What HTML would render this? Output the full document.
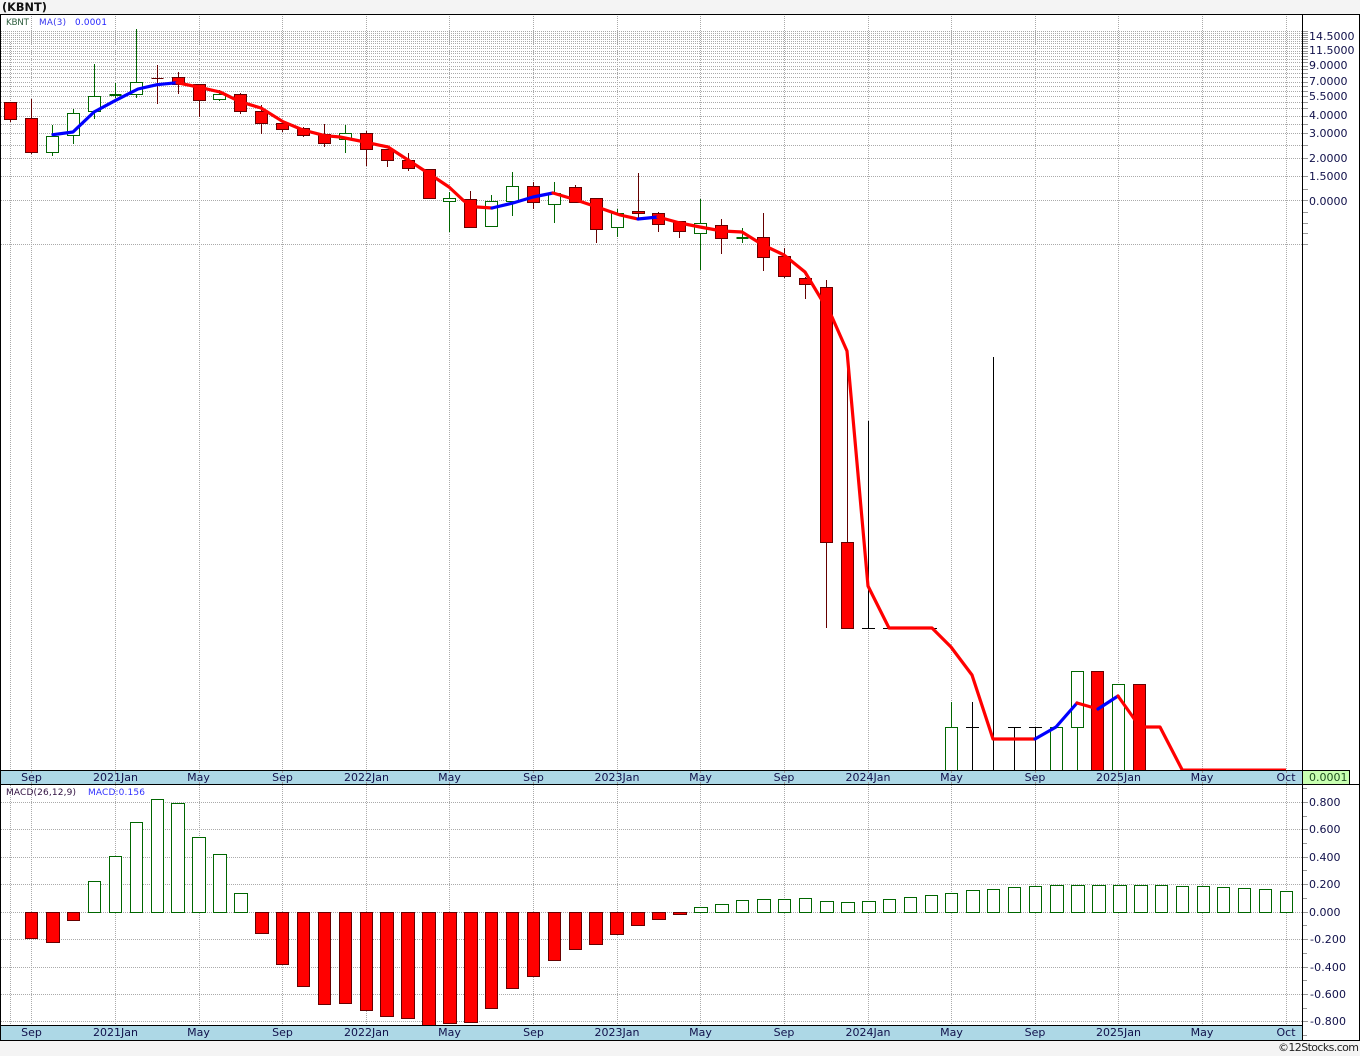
<!DOCTYPE html>
<html>
<head>
<meta charset="utf-8">
<title>KBNT</title>
<style>
html,body{margin:0;padding:0;background:#f4f4f4;width:1360px;height:1056px;overflow:hidden}
svg{display:block}
text{font-family:"DejaVu Sans","Liberation Sans",sans-serif;font-size:11px;fill:#10104a}
.g{fill:none;stroke:#aaa;stroke-width:1;stroke-dasharray:1 1;shape-rendering:crispEdges}
.t{fill:none;stroke:#999;stroke-width:1;shape-rendering:crispEdges}
.k{fill:none;stroke:#000;stroke-width:1;shape-rendering:crispEdges}
.wr{fill:none;stroke:#660000;stroke-width:1;shape-rendering:crispEdges}
.wg{fill:none;stroke:#006600;stroke-width:1;shape-rendering:crispEdges}
.r rect{fill:#f00;stroke:#660000;stroke-width:1;shape-rendering:crispEdges}
.h rect{fill:#fff;stroke:#006600;stroke-width:1;shape-rendering:crispEdges}
.mr{fill:none;stroke:#f00;stroke-width:3.2;stroke-linejoin:round;stroke-linecap:round}
.mb{fill:none;stroke:#00f;stroke-width:3.2;stroke-linejoin:round;stroke-linecap:round}
.c{text-anchor:middle}
</style>
</head>
<body>
<svg width="1360" height="1056" viewBox="0 0 1360 1056" xmlns="http://www.w3.org/2000/svg">
<rect x="0" y="0" width="1360" height="1056" fill="#f4f4f4"/>
<rect x="0" y="14" width="1360" height="1027" fill="#fff"/>

<!-- grid upper -->
<path class="g" d="M1 244.5H1303M1 200.5H1303M1 176.5H1303M1 158.5H1303M1 145.5H1303M1 133.5H1303M1 124.5H1303M1 116.5H1303M1 108.5H1303M1 102.5H1303M1 96.5H1303M1 91.5H1303M1 86.5H1303M1 82.5H1303M1 77.5H1303M1 73.5H1303M1 69.5H1303M1 66.5H1303M1 62.5H1303M1 59.5H1303M1 56.5H1303M1 53.5H1303M1 51.5H1303M1 48.5H1303M1 46.5H1303M1 43.5H1303M1 41.5H1303M1 39.5H1303M1 37.5H1303M1 35.5H1303M1 33.5H1303M1 31.5H1303"/>
<path class="g" d="M10.5 42V770M31.5 14V770M115.5 14V770M199.5 14V770M282.5 14V770M366.5 14V770M449.5 14V770M533.5 14V770M617.5 14V770M700.5 14V770M784.5 14V770M868.5 14V770M951.5 14V770M1035.5 14V770M1118.5 14V770M1202.5 14V770M1286.5 14V770"/>

<!-- grid lower -->
<path class="g" d="M1 802.5H1303M1 829.5H1303M1 857.5H1303M1 884.5H1303M1 912.5H1303M1 939.5H1303M1 967.5H1303M1 994.5H1303M1 1021.5H1303"/>
<path class="g" d="M10.5 785V1025M31.5 785V1025M115.5 785V1025M199.5 785V1025M282.5 785V1025M366.5 785V1025M449.5 785V1025M533.5 785V1025M617.5 785V1025M700.5 785V1025M784.5 785V1025M868.5 785V1025M951.5 785V1025M1035.5 785V1025M1118.5 785V1025M1202.5 785V1025M1286.5 785V1025"/>

<!-- wicks -->
<path class="wr" d="M10.5 120V122M31.5 99V154M157.5 65V104M151.5 78.5H163.5M178.5 72V94M199.5 84V117M240.5 93V114M261.5 105V134M282.5 123V132M303.5 127V137M324.5 124V147M366.5 131V166M387.5 149V167M408.5 153V171M470.5 191V227M533.5 182V209M575.5 185V202M596.5 198V243M638.5 173V218M658.5 212V232M679.5 221V238M721.5 219V254M763.5 213V271M784.5 248V278M805.5 277V299M826.5 280V628M847.5 351V543"/>
<path class="wg" d="M52.5 125V156M73.5 109V144M94.5 64V119M115.5 83V98M136.5 29V98M219.5 90V101M345.5 125V153M449.5 192V232M491.5 195V227M512.5 172V216M554.5 182V223M617.5 209V237M700.5 199V270M742.5 228V243M951.5 702V728M1077.5 727V770"/>
<path class="k" d="M868.5 421V628M862 628.5H875M883 628.5H937M972.5 702V770M966 727.5H979M993.5 357V770M1014.5 727V770M1008 727.5H1021M1035.5 727V770M1029 727.5H1042"/>

<!-- filled doji -->
<rect x="109.5" y="94" width="12" height="2" fill="#006600"/>
<rect x="736.5" y="237" width="12" height="2" fill="#006600"/>

<!-- hollow candles -->
<g class="h">
<rect x="46.5" y="136.5" width="12" height="16"/>
<rect x="67.5" y="113.5" width="12" height="22"/>
<rect x="88.5" y="96.5" width="12" height="15"/>
<rect x="130.5" y="82.5" width="12" height="12"/>
<rect x="213.5" y="94.5" width="12" height="5"/>
<rect x="339.5" y="133.5" width="12" height="6"/>
<rect x="443.5" y="198.5" width="12" height="3"/>
<rect x="485.5" y="201.5" width="12" height="25"/>
<rect x="506.5" y="186.5" width="12" height="15"/>
<rect x="548.5" y="193.5" width="12" height="11"/>
<rect x="611.5" y="213.5" width="12" height="14"/>
<rect x="694.5" y="223.5" width="12" height="10"/>
<rect x="945.5" y="727.5" width="12" height="43"/>
<rect x="1050.5" y="727.5" width="12" height="43"/>
<rect x="1071.5" y="671.5" width="12" height="56"/>
<rect x="1112.5" y="684.5" width="12" height="86"/>
</g>

<!-- red candles -->
<g class="r">
<rect x="4.5" y="102.5" width="12" height="17"/>
<rect x="25.5" y="118.5" width="12" height="34"/>
<rect x="172.5" y="77.5" width="12" height="7"/>
<rect x="193.5" y="84.5" width="12" height="16"/>
<rect x="234.5" y="94.5" width="12" height="17"/>
<rect x="255.5" y="111.5" width="12" height="12"/>
<rect x="276.5" y="123.5" width="12" height="6"/>
<rect x="297.5" y="128.5" width="12" height="7"/>
<rect x="318.5" y="134.5" width="12" height="9"/>
<rect x="360.5" y="133.5" width="12" height="16"/>
<rect x="381.5" y="149.5" width="12" height="11"/>
<rect x="402.5" y="160.5" width="12" height="8"/>
<rect x="423.5" y="169.5" width="12" height="29"/>
<rect x="464.5" y="199.5" width="12" height="28"/>
<rect x="527.5" y="186.5" width="12" height="16"/>
<rect x="569.5" y="187.5" width="12" height="15"/>
<rect x="590.5" y="198.5" width="12" height="31"/>
<rect x="632.5" y="211.5" width="12" height="2"/>
<rect x="652.5" y="213.5" width="12" height="11"/>
<rect x="673.5" y="221.5" width="12" height="10"/>
<rect x="715.5" y="225.5" width="12" height="13"/>
<rect x="757.5" y="237.5" width="12" height="20"/>
<rect x="778.5" y="256.5" width="12" height="20"/>
<rect x="799.5" y="278.5" width="12" height="6"/>
<rect x="820.5" y="287.5" width="12" height="255"/>
<rect x="841.5" y="542.5" width="12" height="86"/>
<rect x="1091.5" y="671.5" width="12" height="99"/>
<rect x="1133.5" y="684.5" width="12" height="86"/>
</g>

<!-- moving average -->
<path class="mb" d="M53 134.7L73 132L94 112L115 100.7L138 89L157 84.7L177 82.7"/>
<path class="mr" d="M177 82.7L198 87L220 92L240 101.7L261 108L283 121.7L303 130L325 135.7L340 137L360 141L388 147L408 160L428 173L449 187L464 201L477 207L492 208"/>
<path class="mb" d="M492 208L513 203L533 197L553 193"/>
<path class="mr" d="M553 193L573 199L597 207L620 215L638 219"/>
<path class="mb" d="M638 219L658 217"/>
<path class="mr" d="M658 217L680 223L700 227L722 231L742 232L763 245L784 255L805 272L820 297L832 317L847 351L868 586L889 628L932 628L951 647L972 675L993 739L1035 739"/>
<path class="mb" d="M1035 739L1056 727L1077 703"/>
<path class="mr" d="M1077 703L1098 709"/>
<path class="mb" d="M1098 709L1118 696"/>
<path class="mr" d="M1118 696L1140 727L1160 727L1182 769.5"/>
<path d="M1182 769.5H1286" fill="none" stroke="#f00" stroke-width="2"/>

<!-- MACD bars -->
<g class="r">
<rect x="25.5" y="912.5" width="12" height="26"/>
<rect x="46.5" y="912.5" width="13" height="30"/>
<rect x="67.5" y="912.5" width="12" height="8"/>
<rect x="255.5" y="912.5" width="13" height="21"/>
<rect x="276.5" y="912.5" width="12" height="52"/>
<rect x="297.5" y="912.5" width="12" height="74"/>
<rect x="318.5" y="912.5" width="12" height="92"/>
<rect x="339.5" y="912.5" width="12" height="91"/>
<rect x="360.5" y="912.5" width="12" height="98"/>
<rect x="380.5" y="912.5" width="13" height="104"/>
<rect x="401.5" y="912.5" width="13" height="106"/>
<rect x="422.5" y="912.5" width="13" height="113"/>
<rect x="443.5" y="912.5" width="13" height="111"/>
<rect x="464.5" y="912.5" width="13" height="110"/>
<rect x="485.5" y="912.5" width="12" height="96"/>
<rect x="506.5" y="912.5" width="12" height="76"/>
<rect x="527.5" y="912.5" width="12" height="64"/>
<rect x="548.5" y="912.5" width="12" height="48"/>
<rect x="569.5" y="912.5" width="12" height="37"/>
<rect x="589.5" y="912.5" width="13" height="32"/>
<rect x="610.5" y="912.5" width="13" height="22"/>
<rect x="631.5" y="912.5" width="13" height="13"/>
<rect x="652.5" y="912.5" width="13" height="7"/>
<rect x="673.5" y="912.5" width="13" height="2"/>
</g>
<g class="h">
<rect x="88.5" y="881.5" width="12" height="31"/>
<rect x="109.5" y="856.5" width="12" height="56"/>
<rect x="130.5" y="822.5" width="12" height="90"/>
<rect x="151.5" y="799.5" width="12" height="113"/>
<rect x="171.5" y="803.5" width="13" height="109"/>
<rect x="192.5" y="837.5" width="13" height="75"/>
<rect x="213.5" y="854.5" width="13" height="58"/>
<rect x="234.5" y="893.5" width="13" height="19"/>
<rect x="694.5" y="907.5" width="13" height="5"/>
<rect x="715.5" y="904.5" width="13" height="8"/>
<rect x="736.5" y="900.5" width="12" height="12"/>
<rect x="757.5" y="899.5" width="13" height="13"/>
<rect x="778.5" y="899.5" width="12" height="13"/>
<rect x="799.5" y="898.5" width="12" height="14"/>
<rect x="820.5" y="901.5" width="13" height="11"/>
<rect x="841.5" y="902.5" width="13" height="10"/>
<rect x="862.5" y="901.5" width="13" height="11"/>
<rect x="883.5" y="899.5" width="12" height="13"/>
<rect x="904.5" y="897.5" width="12" height="15"/>
<rect x="925.5" y="895.5" width="12" height="17"/>
<rect x="945.5" y="893.5" width="12" height="19"/>
<rect x="966.5" y="890.5" width="13" height="22"/>
<rect x="987.5" y="889.5" width="12" height="23"/>
<rect x="1008.5" y="887.5" width="12" height="25"/>
<rect x="1029.5" y="886.5" width="12" height="26"/>
<rect x="1050.5" y="885.5" width="13" height="27"/>
<rect x="1071.5" y="885.5" width="13" height="27"/>
<rect x="1092.5" y="885.5" width="13" height="27"/>
<rect x="1113.5" y="885.5" width="13" height="27"/>
<rect x="1134.5" y="885.5" width="13" height="27"/>
<rect x="1155.5" y="885.5" width="12" height="27"/>
<rect x="1176.5" y="886.5" width="12" height="26"/>
<rect x="1197.5" y="886.5" width="12" height="26"/>
<rect x="1217.5" y="887.5" width="12" height="25"/>
<rect x="1238.5" y="888.5" width="12" height="24"/>
<rect x="1259.5" y="889.5" width="12" height="23"/>
<rect x="1280.5" y="891.5" width="12" height="21"/>
</g>

<!-- bands -->
<rect x="1" y="771" width="1302" height="13" fill="#add8e6"/>
<rect x="1" y="1026" width="1302" height="14" fill="#add8e6"/>
<rect x="1303" y="771" width="46" height="13" fill="#c8ffb0"/>
<path class="k" d="M1 770.5H1350M0 784.5H1360M1349.5 770V784M0 1025.5H1303M0 1040.5H1360M0 14.5H1360M0.5 14V1040M1302.5 14V1040M1359.5 14V1040"/>
<path class="t" d="M31.5 771V773M115.5 771V773M199.5 771V773M282.5 771V773M366.5 771V773M449.5 771V773M533.5 771V773M617.5 771V773M700.5 771V773M784.5 771V773M868.5 771V773M951.5 771V773M1035.5 771V773M1118.5 771V773M1202.5 771V773M1286.5 771V773M31.5 782V784M115.5 782V784M199.5 782V784M282.5 782V784M366.5 782V784M449.5 782V784M533.5 782V784M617.5 782V784M700.5 782V784M784.5 782V784M868.5 782V784M951.5 782V784M1035.5 782V784M1118.5 782V784M1202.5 782V784M1286.5 782V784"/>

<!-- right axis ticks -->
<path class="t" d="M1303 244.5H1308M1303 233.5H1308M1303 223.5H1308M1303 212.5H1308M1303 200.5H1308M1303 189.5H1308M1303 176.5H1308M1303 158.5H1308M1303 145.5H1308M1303 133.5H1308M1303 124.5H1308M1303 116.5H1308M1303 108.5H1308M1303 102.5H1308M1303 96.5H1308M1303 91.5H1308M1303 86.5H1308M1303 82.5H1308M1303 77.5H1308M1303 73.5H1308M1303 69.5H1308M1303 66.5H1308M1303 62.5H1308M1303 59.5H1308M1303 56.5H1308M1303 53.5H1308M1303 51.5H1308M1303 48.5H1308M1303 46.5H1308M1303 43.5H1308M1303 41.5H1308M1303 39.5H1308M1303 37.5H1308M1303 35.5H1308M1303 33.5H1308M1303 31.5H1308"/>
<path class="t" d="M1303 788.5H1307M1303 802.5H1308M1303 816.5H1307M1303 829.5H1308M1303 843.5H1307M1303 857.5H1308M1303 870.5H1307M1303 884.5H1308M1303 898.5H1307M1303 912.5H1308M1303 925.5H1307M1303 939.5H1308M1303 953.5H1307M1303 967.5H1308M1303 980.5H1307M1303 994.5H1308M1303 1008.5H1307M1303 1021.5H1308M1303 1035.5H1307"/>

<!-- title and legends -->
<text x="2" y="11" font-weight="bold" style="font-weight:bold;font-size:11.3px;fill:#111">(KBNT)</text>
<text x="6" y="25" style="font-size:8.8px;fill:#2f5f3f" textLength="23">KBNT</text>
<text x="39" y="25" style="font-size:8.8px;fill:#3333ee" textLength="27">MA(3)</text>
<text x="75" y="25" style="font-size:8.8px;fill:#2222ff" textLength="32">0.0001</text>
<text x="6" y="795" style="font-size:9px;fill:#301040" textLength="70">MACD(26,12,9)</text>
<text x="88" y="795" style="font-size:9px;fill:#3333ff" textLength="57">MACD:0.156</text>

<!-- right axis labels -->
<text x="1309" y="40">14.5000</text>
<text x="1309" y="54">11.5000</text>
<text x="1309" y="69">9.0000</text>
<text x="1309" y="85">7.0000</text>
<text x="1309" y="100">5.5000</text>
<text x="1309" y="119">4.0000</text>
<text x="1309" y="137">3.0000</text>
<text x="1309" y="162">2.0000</text>
<text x="1309" y="180">1.5000</text>
<text x="1309" y="205">0.0000</text>
<text x="1309" y="781" style="fill:#1f4f1f">0.0001</text>
<text x="1309" y="806">0.800</text>
<text x="1309" y="833">0.600</text>
<text x="1309" y="861">0.400</text>
<text x="1309" y="888">0.200</text>
<text x="1309" y="916">0.000</text>
<text x="1310" y="943" textLength="36">-0.200</text>
<text x="1310" y="971" textLength="36">-0.400</text>
<text x="1310" y="998" textLength="36">-0.600</text>
<text x="1310" y="1025" textLength="36">-0.800</text>

<!-- date labels -->
<g class="c">
<text class="c" x="31.5" y="781">Sep</text>
<text class="c" x="115.5" y="781">2021Jan</text>
<text class="c" x="198.5" y="781">May</text>
<text class="c" x="282.5" y="781">Sep</text>
<text class="c" x="366.5" y="781">2022Jan</text>
<text class="c" x="449.5" y="781">May</text>
<text class="c" x="533.5" y="781">Sep</text>
<text class="c" x="617" y="781">2023Jan</text>
<text class="c" x="700.5" y="781">May</text>
<text class="c" x="784" y="781">Sep</text>
<text class="c" x="868" y="781">2024Jan</text>
<text class="c" x="951.5" y="781">May</text>
<text class="c" x="1035" y="781">Sep</text>
<text class="c" x="1118.5" y="781">2025Jan</text>
<text class="c" x="1202" y="781">May</text>
<text class="c" x="1286" y="781">Oct</text>
<text class="c" x="31.5" y="1036">Sep</text>
<text class="c" x="115.5" y="1036">2021Jan</text>
<text class="c" x="198.5" y="1036">May</text>
<text class="c" x="282.5" y="1036">Sep</text>
<text class="c" x="366.5" y="1036">2022Jan</text>
<text class="c" x="449.5" y="1036">May</text>
<text class="c" x="533.5" y="1036">Sep</text>
<text class="c" x="617" y="1036">2023Jan</text>
<text class="c" x="700.5" y="1036">May</text>
<text class="c" x="784" y="1036">Sep</text>
<text class="c" x="868" y="1036">2024Jan</text>
<text class="c" x="951.5" y="1036">May</text>
<text class="c" x="1035" y="1036">Sep</text>
<text class="c" x="1118.5" y="1036">2025Jan</text>
<text class="c" x="1202" y="1036">May</text>
<text class="c" x="1286" y="1036">Oct</text>
</g>

<text x="1278" y="1051" textLength="81" style="font-size:11px;fill:#222">©12Stocks.com</text>
</svg>
</body>
</html>
